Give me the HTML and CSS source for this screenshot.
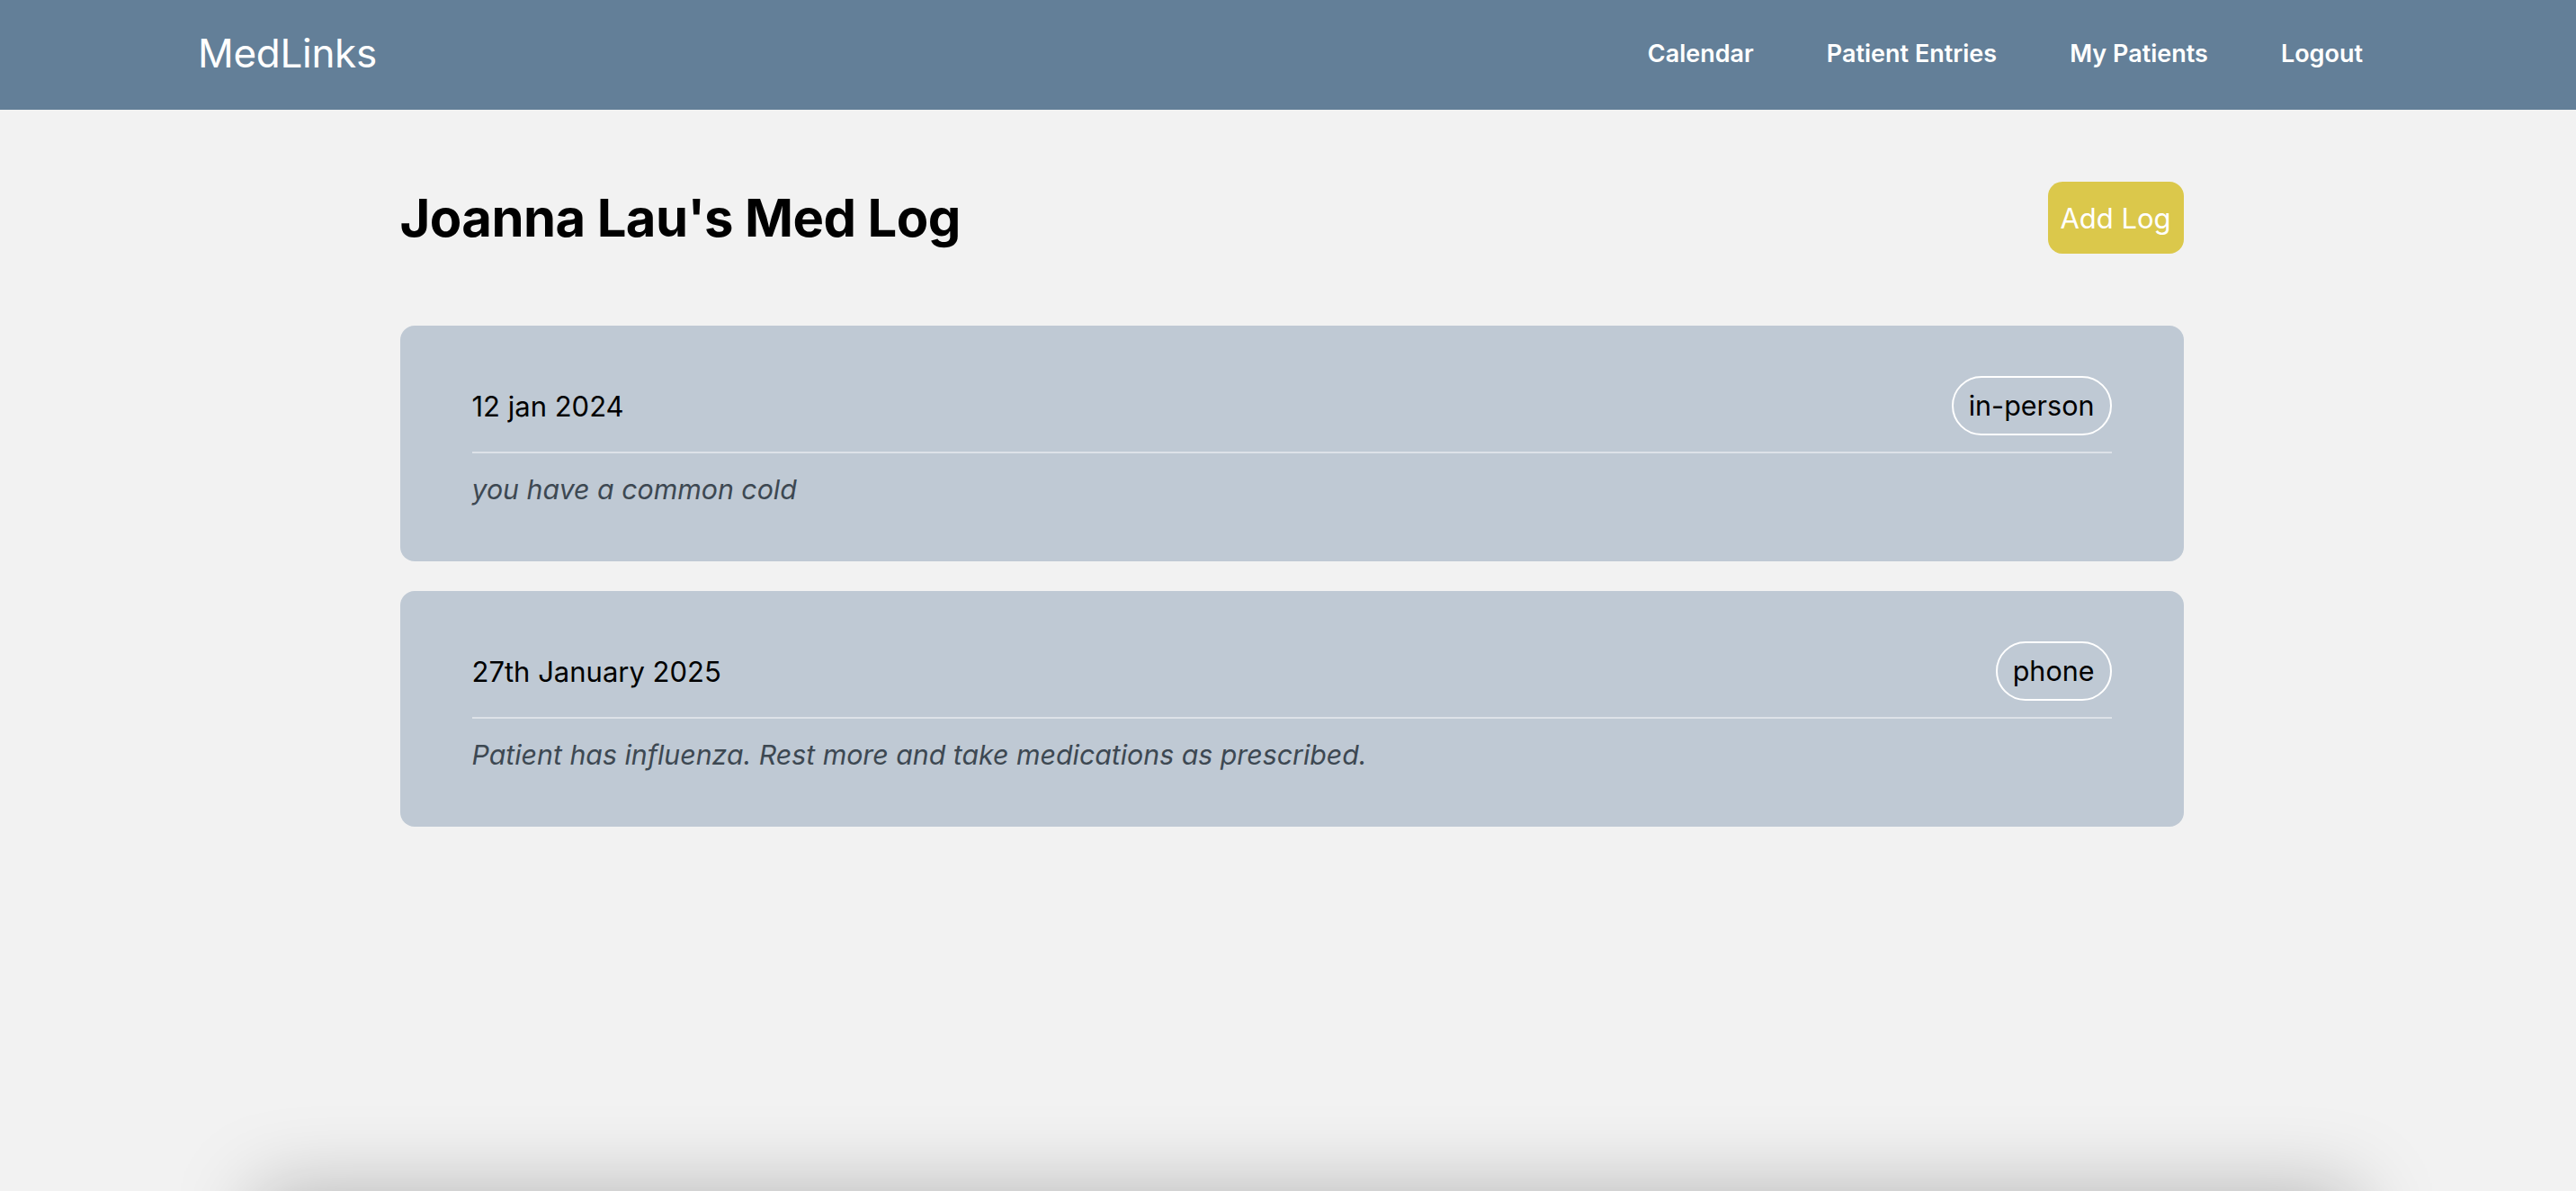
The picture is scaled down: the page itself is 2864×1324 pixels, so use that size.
FILE: index.html
```html
<!DOCTYPE html>
<html lang="en">
<head>
<meta charset="utf-8">
<title>MedLinks</title>
<link rel="stylesheet" href="styles.css">
</head>
<body>
<header class="topbar">
  <div class="brand">MedLinks</div>
  <nav class="nav">
    <a class="nav-link" href="#">Calendar</a>
    <a class="nav-link" href="#">Patient Entries</a>
    <a class="nav-link" href="#">My Patients</a>
    <a class="nav-link" href="#">Logout</a>
  </nav>
</header>
<main class="page">
  <div class="container">
    <div class="title-row">
      <h1 class="title">Joanna Lau's Med Log</h1>
      <button class="add-btn">Add Log</button>
    </div>
    <div class="logs">
      <section class="log-card">
        <div class="log-head">
          <span class="log-date">12 jan 2024</span>
          <span class="pill">in-person</span>
        </div>
        <p class="log-body">you have a common cold</p>
      </section>
      <section class="log-card">
        <div class="log-head">
          <span class="log-date">27th January 2025</span>
          <span class="pill">phone</span>
        </div>
        <p class="log-body">Patient has influenza. Rest more and take medications as prescribed.</p>
      </section>
    </div>
  </div>
</main>
<footer class="bottom-sheet"></footer>
</body>
</html>
```
FILE: styles.css
```css
* { box-sizing: border-box; }
html, body {
  margin: 0;
  padding: 0;
  background: #f2f2f2;
  font-family: Inter, "Noto Sans", "Liberation Sans", sans-serif;
  color: #000;
}
.topbar {
  height: 122px;
  background: #637f98;
  display: flex;
  align-items: center;
  justify-content: space-between;
  padding: 0 237px 4px 220px;
}
.brand {
  color: #fff;
  font-size: 44px;
  font-weight: 400;
  letter-spacing: -0.3px;
}
.nav {
  display: flex;
  gap: 81px;
}
.nav-link {
  color: #fff;
  text-decoration: none;
  font-size: 27px;
  font-weight: 600;
}
.page {
  min-height: calc(100vh - 122px);
}
.container {
  width: 1983px;
  margin: 0 auto;
  padding-top: 80px;
  position: relative;
  left: 4px;
}
.title-row {
  display: flex;
  align-items: center;
  justify-content: space-between;
  margin-bottom: 80px;
}
.title {
  margin: 0;
  font-size: 58px;
  font-weight: 700;
  letter-spacing: -0.6px;
}
.add-btn {
  height: 80px;
  width: 151px;
  border: none;
  border-radius: 16px;
  background: #dbc84b;
  color: #fff;
  font-family: inherit;
  font-size: 31px;
  font-weight: 400;
  padding: 0;
}
.logs {
  display: flex;
  flex-direction: column;
  gap: 33px;
}
.log-card {
  background: #bfc9d4;
  border-radius: 16px;
  padding: 56px 80px 61px 80px;
}
.log-head {
  display: flex;
  align-items: center;
  justify-content: space-between;
  padding-bottom: 18px;
  border-bottom: 2px solid #dde2e8;
}
.log-date {
  font-size: 31px;
  color: #000;
}
.pill {
  font-size: 30.5px;
  color: #000;
  border: 2px solid #fff;
  border-radius: 999px;
  padding: 12px 17px 13px;
  line-height: 37px;
}
.log-body {
  margin: 22px 0 0;
  font-size: 30.3px;
  font-style: italic;
  color: #3d4852;
  line-height: 37px;
}
.bottom-sheet {
  height: 200px;
  margin-left: 285px;
  width: 2335px;
  background: #f2f2f2;
  box-shadow: 0 0 90px rgba(0, 0, 0, 0.26);
}
```
